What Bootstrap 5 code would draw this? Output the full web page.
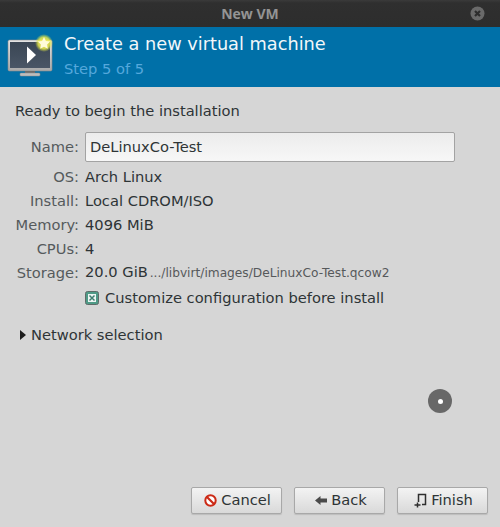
<!DOCTYPE html>
<html lang="en">
<head>
<meta charset="utf-8">
<title>New VM</title>
<link href="https://cdn.jsdelivr.net/npm/bootstrap@5.3.0/dist/css/bootstrap.min.css" rel="stylesheet">
<style>
html,body{height:100%;}
body{background:#d6d6d6;font-family:"DejaVu Sans",sans-serif;font-size:14.67px;color:#2e3436;overflow:hidden;}
.vm-window{height:527px;position:relative;}
.vm-titlebar{height:27px;background:linear-gradient(#3a3a3a 0,#2f2f2f 3px,#2d2d2d 100%);position:relative;}
.vm-wintitle{font-family:"Open Sans",sans-serif;font-weight:700;font-size:14px;color:#949494;line-height:1;}
.vm-close{position:absolute;right:15px;top:6px;width:15px;height:15px;}
.vm-banner{height:60px;background:#0070a8;padding-left:7px;}
.vm-banner-text{margin-left:7px;}
.vm-h1{font-size:17.73px;color:#f2f7fa;line-height:20px;margin-top:7px;}
.vm-h2{font-size:14.67px;color:#55a8dc;line-height:18px;margin-top:6px;}
.vm-ready{margin:15px 15px 0;line-height:18px;}
.vm-form{display:grid;grid-template-columns:64px 1fr;column-gap:6px;margin:12px 45px 0 15px;align-items:center;}
.vm-lab{text-align:right;color:#555a5c;line-height:24px;white-space:nowrap;}
.vm-val{line-height:24px;white-space:nowrap;}
.vm-name-lab{margin-bottom:3px;}
.vm-last{margin-top:-1px;}
.vm-path{font-size:12.2px;color:#56595b;margin-left:-2px;}
.vm-input{height:30px;border:1px solid #a3a3a3;border-radius:2px;background:linear-gradient(#ececec,#f7f7f7);padding:0 4px;line-height:28px;margin-bottom:3px;font-size:14.67px;color:#2e3436;width:370px;}
.vm-check{margin:4px 0 0 85px;line-height:18px;}
.vm-box{width:14px;height:14px;margin-right:6px;flex:none;}
.vm-expander{margin:19px 0 0 20px;line-height:18px;}
.vm-tri{width:0;height:0;border-left:6px solid #1c1c1c;border-top:5px solid transparent;border-bottom:5px solid transparent;margin-right:5px;}
.vm-actions{position:absolute;right:12px;bottom:13px;column-gap:12px;}
.vm-btn{width:91px;height:27px;border:1px solid #a8a8a8;border-radius:2px;background:linear-gradient(#f3f3f3,#d9d9d9);color:#2e3436;font-size:14.67px;padding:0 0 0 2px;line-height:1;box-shadow:0 1px 1px rgba(0,0,0,.12);}
.vm-btn svg{margin-right:4px;}
.vm-cursor{position:absolute;left:428px;top:389px;width:24px;height:24px;border-radius:50%;background:#686868;}
.vm-cursor::after{content:"";position:absolute;left:9.5px;top:9.5px;width:5px;height:5px;border-radius:50%;background:#fff;}
</style>
</head>
<body>
<div class="vm-window">
  <div class="vm-titlebar d-flex align-items-center justify-content-center">
    <span class="vm-wintitle">New VM</span>
    <svg class="vm-close" viewBox="0 0 15 15"><circle cx="7.5" cy="7.5" r="7" fill="#6a6a6a"/><path d="M5 5l5 5M10 5l-5 5" stroke="#2d2d2d" stroke-width="2.2"/></svg>
  </div>
  <div class="vm-banner d-flex align-items-start">
    <svg width="50" height="50" viewBox="0 0 50 50">
      <defs>
        <radialGradient id="glow"><stop offset="0" stop-color="#fff36a"/><stop offset=".65" stop-color="#e8e84a" stop-opacity=".85"/><stop offset="1" stop-color="#d8e040" stop-opacity="0"/></radialGradient>
        <linearGradient id="scr" x1="0" y1="0" x2="0" y2="1"><stop offset="0" stop-color="#3a4654"/><stop offset="1" stop-color="#4a5666"/></linearGradient>
        <linearGradient id="frm" x1="0" y1="0" x2="0" y2="1"><stop offset="0" stop-color="#e6e6e6"/><stop offset="1" stop-color="#a9a9a9"/></linearGradient>
      </defs>
      <rect x="1" y="13" width="44" height="31" rx="1.5" fill="url(#frm)" stroke="#8c8c8c" stroke-width=".6"/>
      <rect x="3" y="15" width="40" height="26" fill="url(#scr)"/>
      <path d="M20 19.500l9 8.500-9 8.500z" fill="#fff"/>
      <rect x="18" y="44" width="10" height="2" fill="#6d6d6d"/>
      <rect x="13" y="46" width="20" height="3" rx="1" fill="#bdbdbd" stroke="#8f8f8f" stroke-width=".5"/>
      <circle cx="37" cy="16" r="9" fill="url(#glow)"/>
      <path d="M37 10l1.900 3.900 4.300.6-3.100 3 .7 4.300-3.800-2-3.800 2 .7-4.300-3.100-3 4.300-.6z" fill="#fffbd8"/>
    </svg>
    <div class="vm-banner-text">
      <div class="vm-h1">Create a new virtual machine</div>
      <div class="vm-h2">Step 5 of 5</div>
    </div>
  </div>
  <div class="vm-ready">Ready to begin the installation</div>
  <div class="vm-form">
    <div class="vm-lab vm-name-lab">Name:</div>
    <div class="vm-input">DeLinuxCo-Test</div>
    <div class="vm-lab">OS:</div><div class="vm-val">Arch Linux</div>
    <div class="vm-lab">Install:</div><div class="vm-val">Local CDROM/ISO</div>
    <div class="vm-lab">Memory:</div><div class="vm-val">4096 MiB</div>
    <div class="vm-lab">CPUs:</div><div class="vm-val">4</div>
    <div class="vm-lab vm-last">Storage:</div><div class="vm-val vm-last">20.0 GiB<span class="vm-path"> .../libvirt/images/DeLinuxCo-Test.qcow2</span></div>
  </div>
  <div class="vm-check d-flex align-items-center">
    <svg class="vm-box" viewBox="0 0 14 14"><rect x=".5" y=".5" width="13" height="13" rx="2" fill="#4f9a86" stroke="#5f6b68"/><rect x="3" y="3" width="8" height="8" fill="#eef5f3"/><path d="M4.500 4.500l5 5M9.500 4.500l-5 5" stroke="#3f7f70" stroke-width="1.500"/></svg>
    <span>Customize configuration before install</span>
  </div>
  <div class="vm-expander d-flex align-items-center">
    <span class="vm-tri"></span><span>Network selection</span>
  </div>
  <div class="vm-actions d-flex">
    <button class="btn vm-btn d-flex align-items-center justify-content-center" type="button">
      <svg width="13" height="13" viewBox="0 0 13 13"><circle cx="6.500" cy="6.500" r="5.200" fill="#fff" stroke="#cc2a16" stroke-width="2"/><path d="M3 3l7 7" stroke="#cc2a16" stroke-width="2.200"/></svg>Cancel</button>
    <button class="btn vm-btn d-flex align-items-center justify-content-center" type="button">
      <svg width="13" height="11" viewBox="0 0 13 11"><path d="M1 5.500L6.500 1v2.500H13v4H6.500V10z" fill="#4a4a4a"/></svg>Back</button>
    <button class="btn vm-btn d-flex align-items-center justify-content-center" type="button">
      <svg width="13" height="15" viewBox="0 0 13 15"><path d="M4.500 9V1.500h7v10H8" fill="none" stroke="#2e2e2e" stroke-width="1.500"/><path d="M.5 12h6M3.500 9.500v5" stroke="#2e2e2e" stroke-width="1.500"/></svg>Finish</button>
  </div>
  <div class="vm-cursor"></div>
</div>
<script src="https://cdn.jsdelivr.net/npm/bootstrap@5.3.0/dist/js/bootstrap.bundle.min.js"></script>
</body>
</html>
